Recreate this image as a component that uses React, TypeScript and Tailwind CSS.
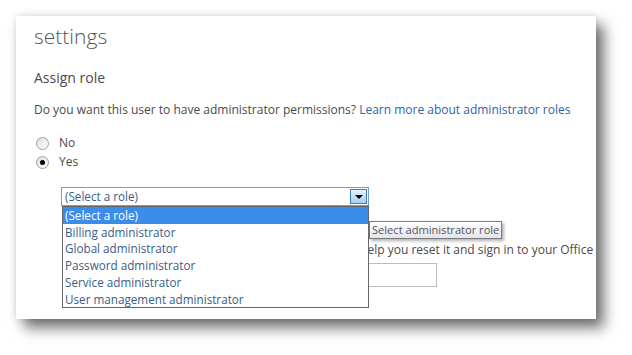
import React from "react";

const font = { fontFamily: '"Open Sans", "Noto Sans", sans-serif' };

function Radio({ checked }: { checked?: boolean }) {
  return (
    <span className="relative flex h-[13px] w-[13px] items-center justify-center rounded-full border border-[#a0a0a0] bg-gradient-to-br from-[#dedede] to-white">
      {checked && <span className="h-[5px] w-[5px] rounded-full bg-black" />}
    </span>
  );
}

export default function App() {
  const items = [
    "(Select a role)",
    "Billing administrator",
    "Global administrator",
    "Password administrator",
    "Service administrator",
    "User management administrator",
  ];
  return (
    <div className="h-[355px] w-[632px] bg-white pt-[16px] pl-[16px]" style={font}>
      <div className="relative h-[303px] w-[580px] overflow-hidden bg-white pl-[18px] text-[#4a4a4a] shadow-[8px_9px_13px_rgba(0,0,0,0.55),0_0_8px_rgba(0,0,0,0.12)]">
        <div className="pt-[4px] text-[21px] font-light leading-[32px] text-[#555]">settings</div>
        <div className="mt-[16px] text-[14px] leading-[20px]">Assign role</div>
        <div className="mt-[12px] text-[12px] leading-[20px] whitespace-nowrap">
          Do you want this user to have administrator permissions?{" "}
          <span className="text-[#2c64a8]">Learn more about administrator roles</span>
        </div>
        <div className="mt-[14px] flex flex-col gap-[1px] text-[12px]">
          <label className="flex h-[18px] items-center gap-[10px] pl-[2px]">
            <Radio />
            <span>No</span>
          </label>
          <label className="flex h-[18px] items-center gap-[10px] pl-[2px]">
            <Radio checked />
            <span>Yes</span>
          </label>
        </div>
        <div className="relative mt-[16px] ml-[27px] w-[308px]">
          <div className="flex h-[19px] items-center border border-[#6e9fd3] pl-[3px] text-[11.7px] text-[#3a5d85]">
            <span className="flex-1">(Select a role)</span>
            <span className="mr-[1px] flex h-[15px] w-[17px] items-center justify-center border border-[#3f7eb8] bg-gradient-to-b from-[#e4f1fd] to-[#a6cdf2]">
              <span className="h-0 w-0 border-x-[4px] border-t-[4px] border-x-transparent border-t-black" />
            </span>
          </div>
          <div className="absolute top-[19px] left-[1px] z-10 w-[307px] border border-[#666] bg-white text-[11.7px] leading-[16.7px] text-[#3a5d85]">
            {items.map((t, i) => (
              <div key={t} className={i === 0 ? "bg-[#3a8ee9] pl-[2px] text-white" : "pl-[2px]"}>
                {t}
              </div>
            ))}
          </div>
          <div className="absolute top-[34px] left-[308px] z-20 whitespace-nowrap border border-[#7a7a7a] bg-gradient-to-b from-white to-[#e3e4ee] px-[2px] text-[11.1px] leading-[16px] text-[#555] shadow-[2px_2px_3px_rgba(0,0,0,0.3)]">
            Select administrator role
          </div>
        </div>
        <div className="mt-[34px] flex whitespace-nowrap text-[12px] leading-[20px]">
          <div className="ml-[30px] flex w-[293px] shrink-0 justify-end overflow-hidden">
            <span className="shrink-0">If you forget your password, we'll use this info to</span>
          </div>
          <span className="shrink-0">&nbsp;help you reset it and sign in to your Office 365 account.</span>
        </div>
        <div className="mt-[3px] ml-[223px] h-[24px] w-[180px] border border-[#bcbcbc]" />
      </div>
    </div>
  );
}
